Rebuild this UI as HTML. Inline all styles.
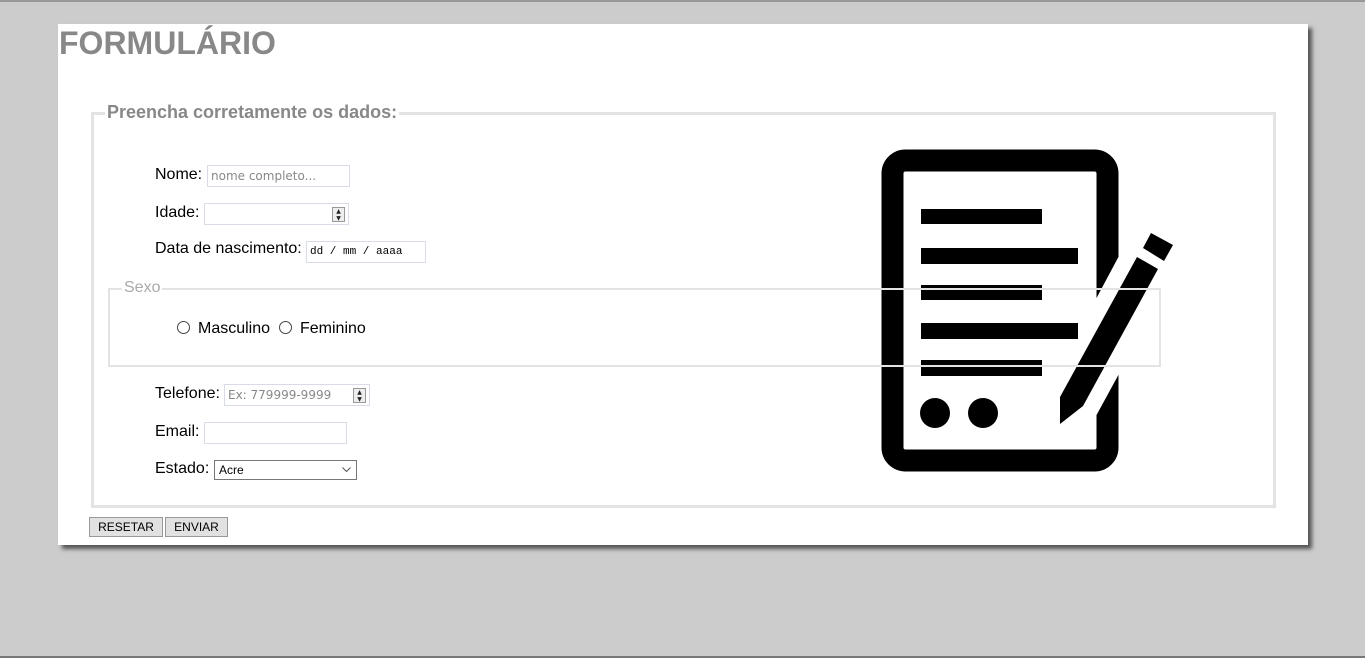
<!DOCTYPE html>
<html><head><meta charset="utf-8"><style>
*{box-sizing:border-box}
body{margin:0;width:1365px;height:658px;background:#cccccc;font-family:"Liberation Sans",Arial,sans-serif;position:relative;overflow:hidden;}
.card{position:absolute;left:58px;top:24px;width:1250px;height:521px;background:#fff;box-shadow:4px 4px 4px #555;}
.abs{position:absolute}
h1{position:absolute;left:59px;top:25px;margin:0;font-size:32px;font-weight:bold;color:#888;}
.fs{position:absolute;left:91px;top:112px;width:1185px;height:396px;border:3px solid #e3e3e3;}
.lg{position:absolute;left:105px;top:102px;background:#fff;padding:0 2px;font-size:18px;font-weight:bold;color:#888;}
.lbl{position:absolute;font-size:16px;color:#000;}
.in{position:absolute;height:22px;border:1px solid #d8dce6;background:#fff;font-size:12px;color:#888;padding:3px 3px;font-family:"DejaVu Sans",sans-serif;}
.spin{position:absolute;right:3px;top:3px;width:13px;height:15px;border:1px solid #999;background:#eee;font-size:6px;line-height:7px;text-align:center;color:#222}
.sx{position:absolute;left:108px;top:288px;width:1053px;height:79px;border:2px solid #e3e3e3;z-index:2}
.sxl{position:absolute;left:122px;top:279px;background:#fff;padding:0 2px;font-size:16px;color:#aaa;z-index:3}
.rad{position:absolute;width:13px;height:13px;border:1px solid #444;border-radius:50%;background:#fff}
.btn{position:absolute;top:517px;height:20px;border:1px solid #999;background:#e1e1e1;font-size:12px;color:#000;text-align:center;line-height:18px}
</style></head><body>
<div class="abs" style="left:0;top:0;width:1365px;height:2px;background:#999"></div>
<div class="card"></div>
<h1>FORMULÁRIO</h1>
<div class="fs"></div>
<div class="lg">Preencha corretamente os dados:</div>

<svg class="abs" style="left:0;top:0;z-index:1" width="1365" height="658">
<rect x="892.5" y="160.5" width="215" height="300" rx="13" fill="none" stroke="#000" stroke-width="22"/>
<polygon points="1096,299 1120,254 1120,372 1096,416" fill="#fff"/>
<rect x="921" y="209" width="121" height="15"/>
<rect x="921" y="248" width="157" height="16"/>
<rect x="921" y="285" width="121" height="15"/>
<rect x="921" y="323" width="157" height="16"/>
<rect x="921" y="360" width="121" height="16"/>
<circle cx="935" cy="413" r="15"/>
<circle cx="983" cy="413" r="15"/>
<polygon points="1137,257 1158,269 1083,406 1060,424 1060,397"/>
<polygon points="1151,233 1173,245 1164,261 1143,248"/>
</svg>

<div class="lbl" style="left:155px;top:166px">Nome:</div>
<div class="in" style="left:207px;top:165px;width:143px">nome completo...</div>
<div class="lbl" style="left:155px;top:204px">Idade:</div>
<div class="in" style="left:204px;top:203px;width:145px"><div class="spin">▲<br>▼</div></div>
<div class="lbl" style="left:155px;top:240px">Data de nascimento:</div>
<div class="in" style="left:306px;top:241px;width:120px;color:#000;font-family:'Liberation Mono',monospace;font-size:11px;padding-top:4px">dd / mm / aaaa</div>

<div class="sx"></div>
<div class="sxl">Sexo</div>
<div class="rad" style="left:177px;top:321px"></div>
<div class="lbl" style="left:198px;top:320px">Masculino</div>
<div class="rad" style="left:279px;top:321px"></div>
<div class="lbl" style="left:300px;top:320px">Feminino</div>

<div class="lbl" style="left:155px;top:385px">Telefone:</div>
<div class="in" style="left:224px;top:384px;width:146px">Ex: 779999-9999<div class="spin">▲<br>▼</div></div>
<div class="lbl" style="left:155px;top:423px">Email:</div>
<div class="in" style="left:204px;top:422px;width:143px"></div>
<div class="lbl" style="left:155px;top:460px">Estado:</div>
<div class="in" style="left:214px;top:460px;width:143px;height:20px;border-color:#777;color:#000;padding:2px 4px;font-family:'Liberation Sans',sans-serif">Acre<svg style="position:absolute;right:5px;top:6px" width="9" height="6"><path d="M0.5 0.5L4.5 4.5L8.5 0.5" fill="none" stroke="#555"/></svg></div>

<div class="btn" style="left:89px;width:74px">RESETAR</div>
<div class="btn" style="left:165px;width:63px">ENVIAR</div>
<div class="abs" style="left:0;top:656px;width:1365px;height:2px;background:#777"></div>
</body></html>
